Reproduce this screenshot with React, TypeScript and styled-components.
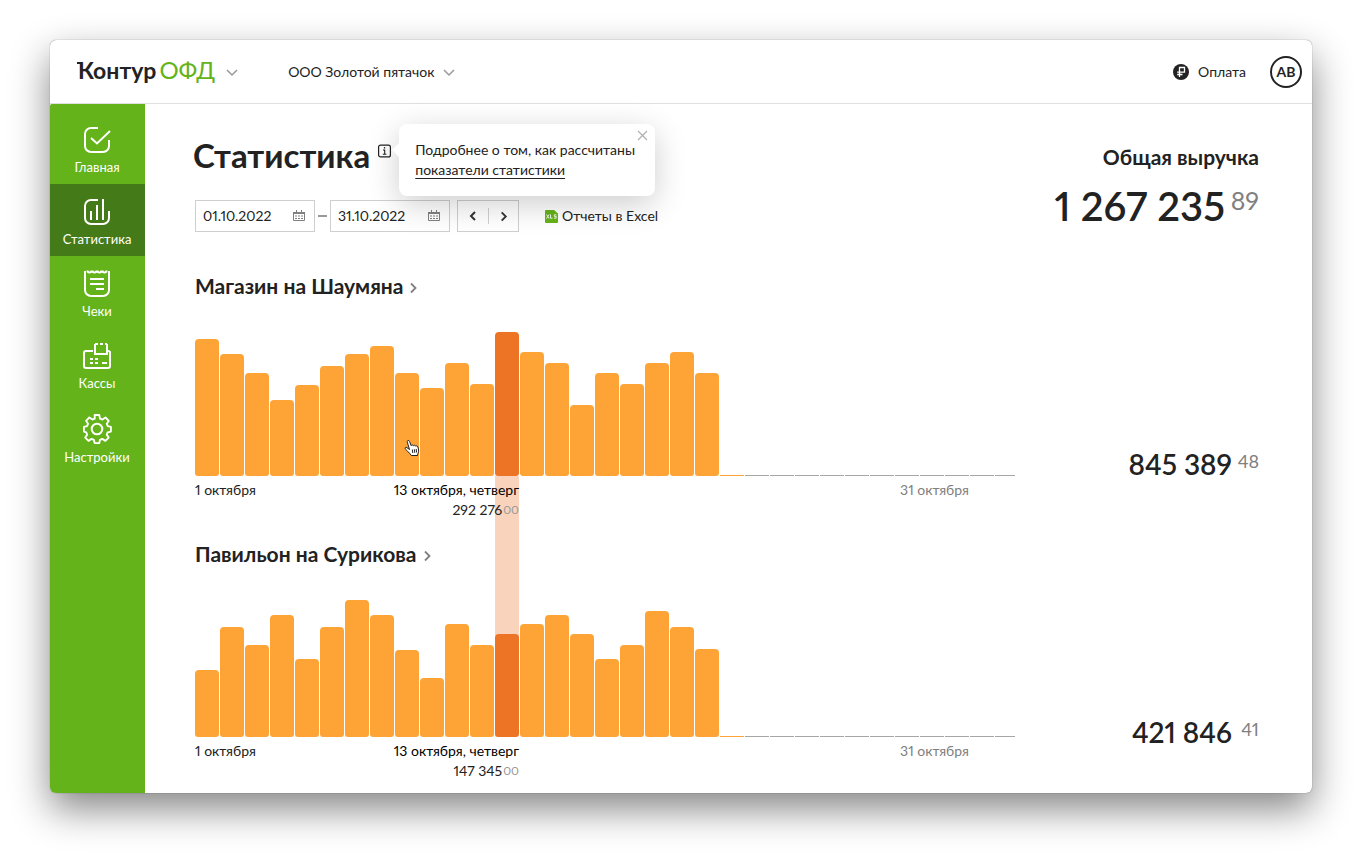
import React from "react";
import styled, { createGlobalStyle, css } from "styled-components";

const color = {
  text: "#222222",
  muted: "#808080",
  green: "#65b31a",
  greenDark: "#457a18",
  bar: "#fea336",
  barActive: "#ec7424",
  band: "#f9d3bc",
  border: "#cfcfcf",
};

const GlobalStyle = createGlobalStyle`
  * { box-sizing: border-box; }
  body {
    margin: 0;
    background: #ffffff;
    color: ${color.text};
    font-family: Lato, "Open Sans", sans-serif;
    font-size: 14px;
    line-height: 20px;
    font-variant-numeric: proportional-nums;
  }
  button, input { font: inherit; color: inherit; }
  h1, h2, p { margin: 0; }
`;

const Page = styled.div`
  display: flex;
  min-height: 100vh;
  padding: 40px 50px 60px;
`;

const Window = styled.div`
  flex: 1;
  display: flex;
  flex-direction: column;
  min-width: 0;
  border-radius: 6px;
  background: #ffffff;
  box-shadow: 0 0 1px rgba(0, 0, 0, 0.6), 0 16px 38px rgba(0, 0, 0, 0.48);
`;

const Header = styled.header`
  display: flex;
  align-items: center;
  height: 64px;
  padding: 0 10px 0 28px;
  border-bottom: 1px solid #e0e0e0;
`;

const PlainButton = styled.button`
  display: inline-flex;
  align-items: center;
  padding: 0;
  border: 0;
  background: none;
  cursor: pointer;
`;

const Brand = styled(PlainButton)`
  gap: 11px;
  margin-right: 50px;
`;

const Wordmark = styled.span`
  position: relative;
  display: flex;
  align-items: baseline;
  gap: 3px;
  padding-bottom: 3px;
  font-size: 23px;
  line-height: 28px;
  font-weight: 700;
  &::before {
    content: "";
    position: absolute;
    left: -1px;
    top: 6px;
    width: 4px;
    height: 2px;
    background: ${color.text};
  }
`;

const Product = styled.span`
  color: ${color.green};
  font-size: 24px;
  font-weight: 400;
`;

const OrgButton = styled(PlainButton)`
  gap: 9px;
`;

const Account = styled.div`
  display: flex;
  align-items: center;
  gap: 24px;
  margin-left: auto;
`;

const PayLink = styled.a`
  display: flex;
  align-items: center;
  gap: 9px;
  color: inherit;
  text-decoration: none;
`;

const Avatar = styled(PlainButton)`
  justify-content: center;
  width: 32px;
  height: 32px;
  border: 2px solid ${color.text};
  border-radius: 50%;
  font-weight: 700;
`;

const Body = styled.div`
  flex: 1;
  display: flex;
`;

const Sidebar = styled.nav`
  flex: 0 0 95px;
  padding-top: 8px;
  border-radius: 2px 0 0 6px;
  background: ${color.green};
`;

const NavLink = styled.a<{ $active?: boolean }>`
  display: flex;
  flex-direction: column;
  align-items: center;
  gap: 3px;
  padding: 14px 1px 7px 0;
  color: #ffffff;
  font-size: 13px;
  text-decoration: none;
  background: ${(p) => (p.$active ? color.greenDark : "transparent")};
`;

const Main = styled.main`
  flex: 1;
  min-width: 0;
  padding: 0 53px 12px 50px;
`;

const Columns = styled.div`
  display: grid;
  grid-template-columns: minmax(0, 1fr) auto;
  column-gap: 32px;
`;

const TopRow = styled(Columns)`
  padding-bottom: 40px;
`;

const StoreRow = styled(Columns)`
  grid-template-columns: minmax(0, 820fr) minmax(0, 244fr);
  column-gap: 0;
  & + & {
    margin-top: 20px;
  }
`;

const TitleRow = styled.div`
  display: flex;
  align-items: flex-start;
  gap: 8px;
  margin-left: -2px;
  padding-top: 29px;
`;

const Title = styled.h1`
  font-size: 33px;
  line-height: 44px;
  font-weight: 700;
`;

const Hint = styled.div`
  position: relative;
  display: flex;
  margin-top: 11px;
`;

const Tooltip = styled.div`
  position: absolute;
  z-index: 2;
  left: 21px;
  top: -20px;
  width: 256px;
  padding: 16px;
  border-radius: 8px;
  background: #ffffff;
  box-shadow: 0 8px 32px rgba(0, 0, 0, 0.2);
  white-space: nowrap;
  &::before {
    content: "";
    position: absolute;
    left: -7px;
    top: 19px;
    border: solid transparent;
    border-width: 7px 7px 7px 0;
    border-right-color: #ffffff;
  }
`;

const TooltipLink = styled.a`
  color: inherit;
  text-decoration: underline;
  text-underline-offset: 3px;
`;

const CloseButton = styled(PlainButton)`
  position: absolute;
  top: 6px;
  right: 7px;
`;

const Filters = styled.div`
  display: flex;
  align-items: center;
  height: 32px;
  margin-top: 23px;
`;

const DateField = styled.label`
  display: flex;
  align-items: center;
  width: 120px;
  height: 32px;
  padding: 0 9px 0 7px;
  border: 1px solid ${color.border};
`;

const DateInput = styled.input`
  flex: 1;
  min-width: 0;
  padding: 0;
  border: 0;
  outline: 0;
  background: none;
`;

const Dash = styled.span`
  width: 9px;
  height: 2px;
  margin: 0 3px;
  background: #999999;
`;

const Pager = styled.div`
  display: flex;
  align-items: center;
  width: 62px;
  height: 32px;
  margin-left: 7px;
  border: 1px solid ${color.border};
`;

const PagerButton = styled(PlainButton)`
  flex: 1;
  justify-content: center;
  height: 16px;
  & + & {
    border-left: 1px solid #d0d0d0;
  }
`;

const ExcelLink = styled.a`
  display: flex;
  align-items: center;
  gap: 4px;
  margin-left: 26px;
  color: inherit;
  text-decoration: none;
  white-space: nowrap;
`;

const Total = styled.div`
  padding-top: 39px;
  text-align: right;
`;

const Heading = styled.h2`
  font-size: 21px;
  line-height: 28px;
  font-weight: 700;
`;

const StoreLink = styled.a`
  display: inline-flex;
  align-items: center;
  gap: 4px;
  color: inherit;
  text-decoration: none;
  svg {
    margin-top: 3px;
  }
`;

const Sum = styled.p<{ $large?: boolean }>`
  display: flex;
  justify-content: flex-end;
  align-items: flex-start;
  font-weight: 600;
  white-space: nowrap;
  ${(p) =>
    p.$large
      ? css`
          padding-top: 11px;
          font-size: 40px;
          line-height: 48px;
        `
      : css`
          padding-top: 175px;
          font-size: 28px;
          line-height: 34px;
        `}
`;

const Kopecks = styled.span<{ $large?: boolean }>`
  min-width: ${(p) => (p.$large ? 34 : 27)}px;
  color: ${color.muted};
  font-size: ${(p) => (p.$large ? 25 : 18)}px;
  line-height: ${(p) => (p.$large ? 36 : 28)}px;
  font-weight: 400;
  text-align: right;
`;

const Bars = styled.div`
  position: relative;
  display: grid;
  grid-template-columns: repeat(32, minmax(0, 24fr)) minmax(0, 20fr);
  column-gap: 1px;
  align-items: end;
  padding-top: 32px;
`;

const Bar = styled.div<{ $active?: boolean; $band?: boolean }>`
  position: relative;
  border-radius: 4px 4px 3px 3px;
  background: ${(p) => (p.$active ? color.barActive : color.bar)};
  ${(p) =>
    p.$band &&
    css`
      &::after {
        content: "";
        position: absolute;
        left: 0;
        right: 0;
        top: 100%;
        height: 162px;
        background: ${color.band};
      }
    `}
`;

const EmptyDay = styled.div<{ $today?: boolean }>`
  height: 1px;
  background: ${(p) => (p.$today ? color.bar : "#a6a6a6")};
`;

const Legend = styled.div`
  position: relative;
  display: grid;
  grid-template-columns: minmax(0, 324fr) minmax(0, 450fr) minmax(0, 46fr);
  padding-top: 4px;
`;

const LegendStart = styled.div`
  display: flex;
  justify-content: space-between;
`;

const Selected = styled.div`
  color: #000000;
  text-align: right;
`;

const SelectedSum = styled.div`
  display: flex;
  justify-content: flex-end;
  gap: 1px;
  color: ${color.text};
`;

const SmallKopecks = styled.span`
  color: #999999;
  font-size: 12px;
`;

const LegendEnd = styled.div`
  color: ${color.muted};
  text-align: right;
`;

const Cursor = styled.svg`
  position: absolute;
  z-index: 1;
  left: 209px;
  bottom: 19px;
`;

type ChevronProps = { dir: "down" | "left" | "right"; size?: number; stroke: string; weight?: number };

const chevronPath = { down: "M1 4l5 5 5-5", left: "M8 2L4 6l4 4", right: "M4 1.500l4.500 4.500L4 10.500" };

const Chevron = ({ dir, size = 12, stroke, weight = 1.5 }: ChevronProps) => (
  <svg width={size} height={size} viewBox="0 0 12 12" fill="none" stroke={stroke} strokeWidth={weight} aria-hidden>
    <path d={chevronPath[dir]} />
  </svg>
);

const navIconProps = {
  width: 28,
  height: 28,
  viewBox: "0 0 28 28",
  fill: "none",
  stroke: "#ffffff",
  strokeWidth: 2,
  "aria-hidden": true,
} as const;

const HomeIcon = () => (
  <svg {...navIconProps}>
    <path d="M15 2H8a6 6 0 0 0-6 6v12a6 6 0 0 0 6 6h12a6 6 0 0 0 6-6v-6" />
    <path d="M8 12l6 5.500L27 5" />
  </svg>
);

const StatsIcon = () => (
  <svg {...navIconProps}>
    <path d="M15 2H8a6 6 0 0 0-6 6v12a6 6 0 0 0 6 6h12a6 6 0 0 0 6-6v-7" />
    <path d="M8 22v-9M14 22V7M20 22V1" />
  </svg>
);

const ReceiptsIcon = () => (
  <svg {...navIconProps}>
    <path d="M2 1v19a6 6 0 0 0 6 6h12a6 6 0 0 0 6-6V1" />
    <path d="M4.500 .5c0 2.600 4 2.600 4 0M9.500 .5c0 2.600 4 2.600 4 0M14.500 .5c0 2.600 4 2.600 4 0M19.500 .5c0 2.600 4 2.600 4 0" />
    <path d="M7 9h14M7 14h14M13 19h8" />
  </svg>
);

const CashIcon = () => (
  <svg {...navIconProps}>
    <path d="M10 9H3a2 2 0 0 0-2 2v13a2 2 0 0 0 2 2h22a2 2 0 0 0 2-2V10a2 2 0 0 0-2-1" />
    <path d="M12 12V2M24 12V2M11 12h14" />
    <path d="M12 2h3M17 2h3M22 2h2" />
    <path d="M7 17h3M12 17h3M7 21h3M12 21h3M19 21h5" />
  </svg>
);

const SettingsIcon = () => (
  <svg {...navIconProps} width={30} height={30} viewBox="0 0 30 30">
    <path
      strokeLinejoin="round"
      d="M12.500 1.500h5l.8 3.800 2.600 1.100 3.300-2.200 3.500 3.600-2.100 3.200 1 2.500 3.400.8v5l-3.500.8-1 2.500 2.100 3.200-3.500 3.500-3.300-2.100-2.500 1-.8 3.500h-5l-.8-3.500-2.500-1-3.300 2.100-3.500-3.500 2.100-3.200-1-2.500L1 19.300v-5l3.400-.8 1-2.500-2.100-3.200 3.500-3.600 3.300 2.200 2.600-1.100z"
      transform="translate(1 -.4) scale(.93)"
    />
    <circle cx="15" cy="15" r="5.300" />
  </svg>
);

const RubleIcon = () => (
  <svg width="16" height="16" viewBox="0 0 16 16" fill="none" aria-hidden>
    <circle cx="8" cy="8" r="8" fill={color.text} />
    <path d="M6.500 13V3.500h5v4.700H4.200M4.200 10.500h5.300" stroke="#ffffff" strokeWidth="1.300" />
  </svg>
);

const InfoIcon = () => (
  <svg width="13" height="14" viewBox="0 0 13 14" fill="none" stroke={color.text} aria-hidden>
    <rect x=".6" y="1.100" width="11.800" height="11.800" rx="2" strokeWidth="1.200" />
    <path d="M5 6h1.700v4.200M4.800 10.300h3.600" strokeWidth="1.100" />
    <path d="M5.900 3.800h1.300" strokeWidth="1.400" />
  </svg>
);

const CalendarIcon = () => (
  <svg width="12" height="12" viewBox="0 0 12 12" fill="none" stroke="#808080" aria-hidden>
    <path d="M.5 2.500h11v8H.5z" />
    <path d="M0 3h12" strokeWidth="2" />
    <path d="M3.500 0v2M8.500 0v2" />
    <path d="M2 6h2M5 6h2M8 6h2M2 8.500h2M5 8.500h2M8 8.500h2" />
  </svg>
);

const ExcelIcon = () => (
  <svg width="13" height="14" viewBox="0 0 13 14" fill="none" aria-hidden>
    <path d="M1 1h8l4 3.500V13a1 1 0 0 1-1 1H1a1 1 0 0 1-1-1V2a1 1 0 0 1 1-1z" fill={color.green} />
    <path d="M1.500 5.500l2.500 4M4 5.500l-2.500 4M5.500 5.500v3.700h2M11.500 5.800H9.300v1.600h1.900v1.800H9" stroke="#ffffff" strokeWidth=".9" />
  </svg>
);

const CloseIcon = () => (
  <svg width="11" height="11" viewBox="0 0 11 11" stroke="#b0b0b0" strokeWidth="1.200" aria-hidden>
    <path d="M1 1l9 9M10 1l-9 9" />
  </svg>
);

const Hand = () => (
  <Cursor width="16" height="18" viewBox="0 0 16 18" aria-hidden>
    <path
      d="M5.500 10.500L3.300 3.200C2.800 1.300 4.900.7 5.500 2.400l1.700 4.300c.4-1 1.900-1 2.300.1.500-.9 1.900-.7 2.200.4.700-.8 2-.4 2.200.8l.7 3c.3 1.700-.5 2.900-.9 4.200l-.2 1.300H7.400c-.8-1.700-2.600-2.700-3.800-4.300L1.200 9.800c-.7-1.300.8-2 1.800-1.100z"
      fill="#ffffff"
      stroke="#222222"
      strokeLinejoin="round"
    />
    <path d="M8.300 10.500l.5 3.500M10.300 10.300l.5 3.500M12.200 10l.4 3.500" stroke="#222222" fill="none" />
  </Cursor>
);

const navItems = [
  { label: "Главная", Icon: HomeIcon },
  { label: "Статистика", Icon: StatsIcon, active: true },
  { label: "Чеки", Icon: ReceiptsIcon },
  { label: "Кассы", Icon: CashIcon },
  { label: "Настройки", Icon: SettingsIcon },
];

const SELECTED_DAY = 12;
const EMPTY_DAYS = 12;

const stores = [
  {
    name: "Магазин на Шаумяна",
    sum: ["845 389", "48"],
    selected: ["292 276", "00"],
    days: [137, 122, 103, 76, 91, 110, 122, 130, 103, 88, 113, 92, 144, 124, 113, 71, 103, 92, 113, 124, 103],
  },
  {
    name: "Павильон на Сурикова",
    sum: ["421 846", "41"],
    selected: ["147 345", "00"],
    days: [67, 110, 92, 122, 78, 110, 137, 122, 87, 59, 113, 92, 103, 113, 122, 103, 78, 92, 126, 110, 88],
  },
];

const Store = ({ store, first }: { store: (typeof stores)[number]; first: boolean }) => (
  <StoreRow as="section">
    <div>
      <Heading>
        <StoreLink href="#">
          {store.name}
          <Chevron dir="right" stroke="#808080" weight={1.8} />
        </StoreLink>
      </Heading>
      <Bars>
        {store.days.map((value, day) => (
          <Bar
            key={day}
            $active={day === SELECTED_DAY}
            $band={first && day === SELECTED_DAY}
            style={{ height: value }}
          />
        ))}
        {Array.from({ length: EMPTY_DAYS }, (_, i) => (
          <EmptyDay key={i} $today={i === 0} />
        ))}
        {first && <Hand />}
      </Bars>
      <Legend>
        <LegendStart>
          <span>1 октября</span>
          <Selected>
            13 октября, четверг
            <SelectedSum>
              {store.selected[0]}
              <SmallKopecks>{store.selected[1]}</SmallKopecks>
            </SelectedSum>
          </Selected>
        </LegendStart>
        <LegendEnd>31 октября</LegendEnd>
      </Legend>
    </div>
    <Sum>
      {store.sum[0]}
      <Kopecks>{store.sum[1]}</Kopecks>
    </Sum>
  </StoreRow>
);

const DatePicker = ({ label, value }: { label: string; value: string }) => (
  <DateField>
    <DateInput type="text" aria-label={label} defaultValue={value} />
    <CalendarIcon />
  </DateField>
);

export default function App() {
  return (
    <Page>
      <GlobalStyle />
      <Window>
        <Header>
          <Brand type="button">
            <Wordmark>
              Контур<Product>ОФД</Product>
            </Wordmark>
            <Chevron dir="down" stroke="#999999" />
          </Brand>
          <OrgButton type="button">
            ООО Золотой пятачок
            <Chevron dir="down" stroke="#999999" />
          </OrgButton>
          <Account>
            <PayLink href="#">
              <RubleIcon />
              Оплата
            </PayLink>
            <Avatar type="button">АВ</Avatar>
          </Account>
        </Header>
        <Body>
          <Sidebar>
            {navItems.map(({ label, Icon, active }) => (
              <NavLink key={label} href="#" $active={active}>
                <Icon />
                {label}
              </NavLink>
            ))}
          </Sidebar>
          <Main>
            <TopRow>
              <div>
                <TitleRow>
                  <Title>Статистика</Title>
                  <Hint>
                    <InfoIcon />
                    <Tooltip role="tooltip">
                      Подробнее о том, как рассчитаны
                      <br />
                      <TooltipLink href="#">показатели статистики</TooltipLink>
                      <CloseButton type="button" aria-label="Закрыть">
                        <CloseIcon />
                      </CloseButton>
                    </Tooltip>
                  </Hint>
                </TitleRow>
                <Filters>
                  <DatePicker label="Начало периода" value="01.10.2022" />
                  <Dash />
                  <DatePicker label="Конец периода" value="31.10.2022" />
                  <Pager>
                    <PagerButton type="button" aria-label="Предыдущий период">
                      <Chevron dir="left" stroke="#333333" weight={2} />
                    </PagerButton>
                    <PagerButton type="button" aria-label="Следующий период">
                      <Chevron dir="right" size={11} stroke="#333333" weight={2} />
                    </PagerButton>
                  </Pager>
                  <ExcelLink href="#">
                    <ExcelIcon />
                    Отчеты в Excel
                  </ExcelLink>
                </Filters>
              </div>
              <Total>
                <Heading>Общая выручка</Heading>
                <Sum $large>
                  1 267 235
                  <Kopecks $large>89</Kopecks>
                </Sum>
              </Total>
            </TopRow>
            {stores.map((store, i) => (
              <Store key={store.name} store={store} first={i === 0} />
            ))}
          </Main>
        </Body>
      </Window>
    </Page>
  );
}
